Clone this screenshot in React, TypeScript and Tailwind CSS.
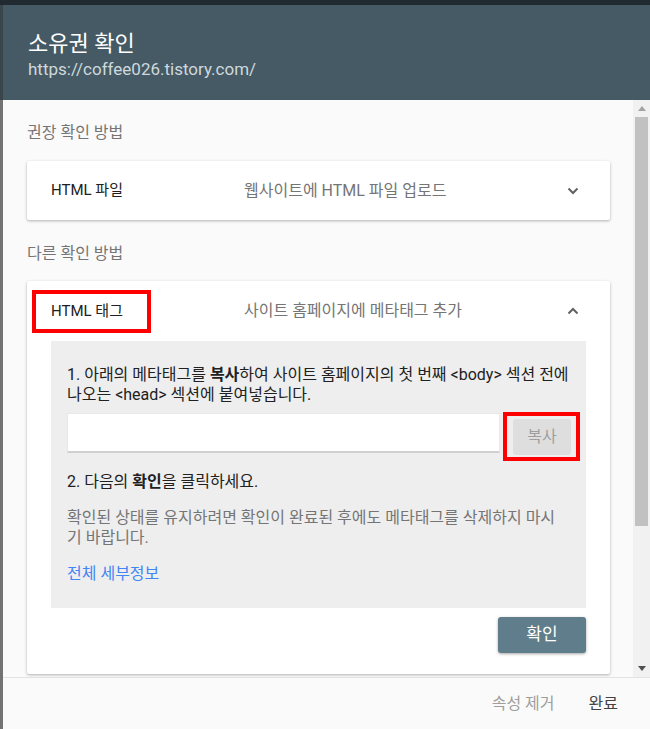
import React from "react";

function Chevron({ up = false }: { up?: boolean }) {
  return (
    <svg width="12" height="8" viewBox="0 0 12 8" className="shrink-0">
      <path
        d={up ? "M1.5 6.5 L6 2 L10.5 6.5" : "M1.5 1.5 L6 6 L10.5 1.5"}
        fill="none"
        stroke="#616161"
        strokeWidth="2"
      />
    </svg>
  );
}

function Scrollbar() {
  return (
    <div className="flex w-[17px] shrink-0 flex-col bg-[#f1f1f1]">
      <div className="flex h-[17px] items-center justify-center">
        <svg width="8" height="5" viewBox="0 0 8 5">
          <path d="M0 5 L4 0 L8 5 Z" fill="#a3a3a3" />
        </svg>
      </div>
      <div className="mx-[2px] h-[409px] bg-[#c1c1c1]" />
      <div className="flex-1" />
      <div className="flex h-[17px] items-center justify-center">
        <svg width="8" height="5" viewBox="0 0 8 5">
          <path d="M0 0 L8 0 L4 5 Z" fill="#505050" />
        </svg>
      </div>
    </div>
  );
}

export default function App() {
  return (
    <div className="flex h-[729px] w-[650px] flex-col overflow-hidden bg-[#202a30] font-['Roboto','Noto_Sans_CJK_KR',sans-serif]">
      <div className="h-[5px] shrink-0" />
      <div className="flex min-h-0 flex-1">
        {/* dimmed page behind the dialog */}
        <div className="flex w-[3px] shrink-0 flex-col">
          <div className="h-[95px] bg-[#3a464c]" />
          <div className="flex-1 bg-[#737373]" />
        </div>

        <div className="flex min-w-0 flex-1 flex-col bg-[#fafafa]">
          <header className="h-[95px] shrink-0 bg-[#455a64] pl-[25px] pt-[24px]">
            <h1 className="text-[22px] leading-[29px] text-white">소유권 확인</h1>
            <p className="text-[17px] leading-[22px] text-[#cfd8dc]">
              https://coffee026.tistory.com/
            </p>
          </header>

          <div className="flex h-[577px] shrink-0">
            <div className="min-w-0 flex-1 overflow-hidden pl-[24px] pr-[23px] pt-[23px]">
              <p className="text-[16px] leading-[20px] text-[#757575]">권장 확인 방법</p>
              <div className="mt-[18px] flex h-[59px] items-center rounded-[2px] bg-white pl-[24px] pr-[31px] shadow-[0_1px_3px_rgba(0,0,0,0.3)]">
                <span className="w-[193px] text-[15px] text-[#212121]">HTML 파일</span>
                <span className="flex-1 text-[16px] text-[#757575]">
                  웹사이트에 HTML 파일 업로드
                </span>
                <Chevron />
              </div>

              <p className="mt-[24px] text-[16px] leading-[20px] text-[#757575]">
                다른 확인 방법
              </p>
              <div className="mt-[17px] rounded-[2px] bg-white shadow-[0_1px_3px_rgba(0,0,0,0.3)]">
                <div className="relative flex h-[60px] items-center pl-[24px] pr-[31px]">
                  <span className="w-[193px] text-[15px] text-[#212121]">HTML 태그</span>
                  <span className="flex-1 text-[16px] text-[#757575]">
                    사이트 홈페이지에 메타태그 추가
                  </span>
                  <Chevron up />
                  <div className="absolute left-[5px] top-[9px] h-[43px] w-[119px] border-4 border-[#ff0000]" />
                </div>

                <div className="mx-[24px] bg-[#eeeeee] px-[16px] pb-[24px] pt-[24px] text-[16px] leading-[20px] text-[#212121]">
                  <p className="whitespace-nowrap">
                    1. 아래의 메타태그를 <b>복사</b>하여 사이트 홈페이지의 첫 번째 &lt;body&gt; 섹션 전에
                    <br />
                    나오는 &lt;head&gt; 섹션에 붙여넣습니다.
                  </p>
                  <div className="mt-[7px] flex items-start gap-[3px]">
                    <div className="mt-[1px] h-[40px] w-[433px] shrink-0 border border-[#e8e8e8] border-b-2 border-b-[#d0d0d0] bg-white" />
                    <div className="shrink-0 border-4 border-[#ff0000] pb-[2px] pl-[6px] pr-[5px] pt-[3px]">
                      <button className="h-[36px] w-[58px] rounded-[3px] bg-[#dedede] text-[16px] text-[#9e9e9e]">
                        복사
                      </button>
                    </div>
                  </div>
                  <p className="mt-[11px]">
                    2. 다음의 <b>확인</b>을 클릭하세요.
                  </p>
                  <p className="mt-[16px] whitespace-nowrap text-[#757575]">
                    확인된 상태를 유지하려면 확인이 완료된 후에도 메타태그를 삭제하지 마시
                    <br />
                    기 바랍니다.
                  </p>
                  <a className="mt-[16px] block text-[#4285f4]">전체 세부정보</a>
                </div>

                <div className="flex justify-end px-[24px] pb-[21px] pt-[9px]">
                  <button className="h-[36px] w-[88px] rounded-[3px] bg-[#607d8b] text-[17px] text-white shadow-[0_1px_3px_rgba(0,0,0,0.35)]">
                    확인
                  </button>
                </div>
              </div>
            </div>
            <Scrollbar />
          </div>

          <footer className="flex flex-1 items-center justify-end gap-[34px] border-t border-[#e3e3e3] pr-[32px] text-[16px]">
            <span className="text-[#9e9e9e]">속성 제거</span>
            <span className="text-[#424242]">완료</span>
          </footer>
        </div>
      </div>
    </div>
  );
}
